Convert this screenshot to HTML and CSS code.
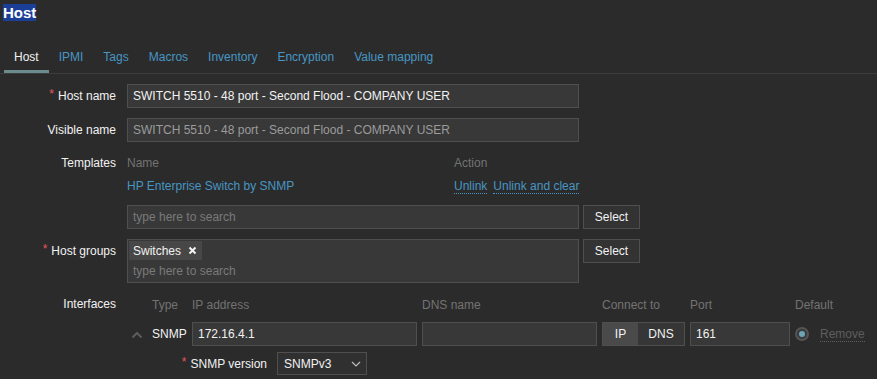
FILE: index.html
```html
<!DOCTYPE html>
<html lang="en">

<head>
    <meta charset="UTF-8">
    <meta name="viewport" content="width=device-width, initial-scale=1.0">
    <title>Host</title>
    <link rel="stylesheet" href="styles.css">
</head>

<body>
    <h1 class="title">Host</h1>

    <ul class="tabs">
        <li class="tab active">Host</li>
        <li class="tab">IPMI</li>
        <li class="tab">Tags</li>
        <li class="tab">Macros</li>
        <li class="tab">Inventory</li>
        <li class="tab">Encryption</li>
        <li class="tab">Value mapping</li>
    </ul>

    <div class="form">
        <label class="label required">Host name</label>
        <div class="field">
            <input class="input wide" type="text" value="SWITCH 5510 - 48 port - Second Flood - COMPANY USER">
        </div>

        <label class="label">Visible name</label>
        <div class="field">
            <input class="input wide muted" type="text" value="SWITCH 5510 - 48 port - Second Flood - COMPANY USER">
        </div>

        <label class="label head-label">Templates</label>
        <div class="field">
            <div class="tpl-table">
                <div class="th">Name</div>
                <div class="th">Action</div>
                <div class="td"><a class="link" href="#">HP Enterprise Switch by SNMP</a></div>
                <div class="td actions">
                    <a class="link dotted" href="#">Unlink</a>
                    <a class="link dotted" href="#">Unlink and clear</a>
                </div>
            </div>
            <div class="with-btn">
                <input class="input wide" type="text" placeholder="type here to search">
                <button class="btn">Select</button>
            </div>
        </div>

        <label class="label required">Host groups</label>
        <div class="field with-btn">
            <div class="multiselect">
                <span class="chip">Switches
                    <svg class="chip-x" width="9" height="9" viewBox="0 0 9 9">
                        <path d="M1.5 1.5 L7.5 7.5 M7.5 1.5 L1.5 7.5" stroke="#f2f2f2" stroke-width="2" />
                    </svg>
                </span>
                <input class="ms-search" type="text" placeholder="type here to search">
            </div>
            <button class="btn">Select</button>
        </div>

        <label class="label head-label">Interfaces</label>
        <div class="field">
            <div class="iface">
                <div></div>
                <div class="th">Type</div>
                <div class="th">IP address</div>
                <div class="th">DNS name</div>
                <div class="th">Connect to</div>
                <div class="th">Port</div>
                <div class="th">Default</div>

                <div class="caret">
                    <svg width="12" height="8" viewBox="0 0 12 8">
                        <path d="M1.5 6.5 L6 2 L10.5 6.5" fill="none" stroke="#5c5c5c" stroke-width="2" />
                    </svg>
                </div>
                <div class="type">SNMP</div>
                <input class="input" type="text" value="172.16.4.1">
                <input class="input" type="text" value="">
                <div class="toggle">
                    <span class="seg on">IP</span>
                    <span class="seg">DNS</span>
                </div>
                <input class="input" type="text" value="161">
                <div class="default">
                    <span class="radio"><span class="dot"></span></span>
                    <a class="remove" href="#">Remove</a>
                </div>
            </div>

            <div class="snmp-row">
                <label class="sub-label required">SNMP version</label>
                <div class="select">
                    <span>SNMPv3</span>
                    <svg width="10" height="6" viewBox="0 0 10 6">
                        <path d="M1 1 L5 5 L9 1" fill="none" stroke="#bdbdbd" stroke-width="1.2" />
                    </svg>
                </div>
            </div>
        </div>
    </div>
</body>

</html>
```

FILE: styles.css
```css
:root {
    --bg: #2b2b2b;
    --field: #383838;
    --border: #4f4f4f;
    --text: #f2f2f2;
    --muted: #737373;
    --link: #4796c4;
    --red: #e45959;
}

* {
    box-sizing: border-box;
    margin: 0;
    padding: 0;
}

body {
    font-family: 'Liberation Sans', Arial, sans-serif;
    font-size: 12px;
    background: var(--bg);
    color: var(--text);
    min-height: 100vh;
}

.title {
    display: inline-block;
    margin: 4px 0 0 3px;
    font-size: 15px;
    line-height: 17px;
    font-weight: 700;
    color: #ffffff;
    background: #1b3f97;
}

.tabs {
    list-style: none;
    display: flex;
    margin-top: 21px;
    padding-left: 4px;
    border-bottom: 1px solid #3d3d3d;
}

.tab {
    padding: 8px 10px 6px;
    line-height: 14px;
    color: var(--link);
    border-bottom: 3px solid transparent;
}

.tab.active {
    color: var(--text);
    border-bottom-color: #6b8b8e;
}

.form {
    display: grid;
    grid-template-columns: 116px 1fr;
    column-gap: 11px;
    row-gap: 10px;
    margin-top: 10px;
}

.label {
    text-align: right;
    line-height: 24px;
}

.head-label {
    line-height: 22px;
}

.required::before {
    content: '*';
    color: var(--red);
    margin-right: 4px;
    position: relative;
    top: -2px;
}

.input {
    height: 24px;
    background: var(--field);
    border: 1px solid var(--border);
    color: var(--text);
    font: inherit;
    padding: 0 5px;
    outline: none;
    width: 100%;
}

.input.wide {
    width: 452px;
}

.input.muted {
    color: #9b9b9b;
}

.input::placeholder,
.ms-search::placeholder {
    color: #7a7a7a;
}

.tpl-table {
    display: grid;
    grid-template-columns: 327px max-content;
}

.th {
    color: var(--muted);
    line-height: 22px;
}

.td {
    line-height: 24px;
}

.actions {
    display: flex;
    gap: 6px;
    white-space: nowrap;
}

.link {
    color: var(--link);
    text-decoration: none;
}

.dotted {
    border-bottom: 1px dotted var(--link);
    line-height: 14px;
    align-self: center;
}

.with-btn {
    display: flex;
    align-items: flex-start;
    gap: 4px;
}

.tpl-table + .with-btn {
    margin-top: 7px;
}

.btn {
    height: 24px;
    width: 57px;
    background: #333333;
    border: 1px solid var(--border);
    color: var(--text);
    font: inherit;
}

.multiselect {
    width: 452px;
    height: 44px;
    background: var(--field);
    border: 1px solid var(--border);
    padding: 1px;
    display: flex;
    flex-direction: column;
}

.chip {
    align-self: flex-start;
    display: inline-flex;
    align-items: center;
    gap: 7px;
    height: 19px;
    padding: 0 5px 0 4px;
    background: #474747;
}

.ms-search {
    background: transparent;
    border: none;
    color: var(--text);
    font: inherit;
    height: 21px;
    padding: 0 4px;
    outline: none;
}

.iface {
    display: grid;
    grid-template-columns: 20px 35px 225px 175px 83px 100px 80px;
    column-gap: 5px;
    row-gap: 5px;
    align-items: center;
}

.iface .th {
    line-height: 24px;
}

.caret {
    display: flex;
    justify-content: center;
    padding-top: 2px;
}

.type {
    line-height: 24px;
}

.toggle {
    display: flex;
    height: 24px;
    border: 1px solid var(--border);
}

.seg {
    display: flex;
    align-items: center;
    justify-content: center;
    background: #363636;
    flex: 1;
}

.seg.on {
    background: #4a4a4a;
    flex: 0 0 35px;
}

.default {
    display: flex;
    align-items: center;
    gap: 11px;
}

.radio {
    width: 14px;
    height: 14px;
    border-radius: 50%;
    border: 2px solid #545454;
    background: #3a3a3a;
    display: flex;
    align-items: center;
    justify-content: center;
}

.dot {
    width: 6px;
    height: 6px;
    border-radius: 50%;
    background: #6aa5b8;
}

.remove {
    color: #5e5e5e;
    text-decoration: none;
    border-bottom: 1px dotted #5e5e5e;
    line-height: 14px;
}

.snmp-row {
    display: flex;
    align-items: center;
    gap: 10px;
    margin-top: 6px;
}

.sub-label {
    width: 140px;
    text-align: right;
}

.select {
    width: 90px;
    height: 23px;
    border: 1px solid var(--border);
    background: #303030;
    display: flex;
    align-items: center;
    justify-content: space-between;
    padding: 0 5px 0 6px;
}
```
